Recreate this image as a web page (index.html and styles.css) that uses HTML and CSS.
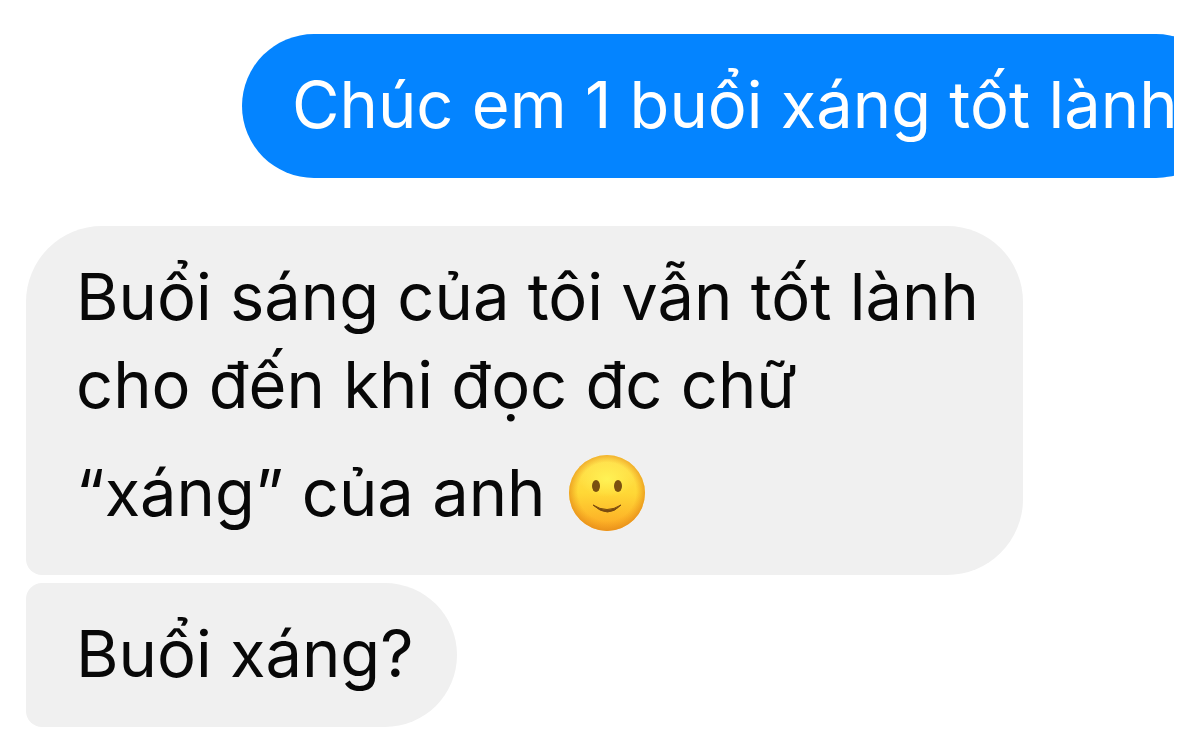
FILE: index.html
```html
<!DOCTYPE html>
<html lang="vi">
<head>
    <meta charset="UTF-8">
    <meta name="viewport" content="width=device-width, initial-scale=1.0">
    <title>Tin nhắn</title>
    <link rel="stylesheet" href="styles.css">
</head>
<body>
    <main class="chat">
        <div class="row sent">
            <p class="bubble">Chúc em 1 buổi xáng tốt lành</p>
        </div>
        <div class="row received">
            <p class="bubble first">Buổi sáng của tôi vẫn tốt lành<br>cho đến khi đọc đc chữ
                <span class="last-line">“xáng” của anh
                    <svg class="emoji" viewBox="0 0 76 76" role="img" aria-label="mặt cười">
                        <defs>
                            <linearGradient id="face" x1="0" y1="0" x2="0" y2="1">
                                <stop offset="0" stop-color="#ffe352"/>
                                <stop offset="0.5" stop-color="#ffd836"/>
                                <stop offset="1" stop-color="#fca522"/>
                            </linearGradient>
                            <radialGradient id="edge" cx="50%" cy="48%" r="51%">
                                <stop offset="0.75" stop-color="#ee9a1c" stop-opacity="0"/>
                                <stop offset="1" stop-color="#e68f1a" stop-opacity="0.8"/>
                            </radialGradient>
                            <radialGradient id="shine">
                                <stop offset="0" stop-color="#fff85a" stop-opacity="0.8"/>
                                <stop offset="1" stop-color="#fff85a" stop-opacity="0"/>
                            </radialGradient>
                        </defs>
                        <circle cx="38" cy="38" r="38" fill="url(#face)"/>
                        <circle cx="38" cy="38" r="38" fill="url(#edge)"/>
                        <ellipse cx="38" cy="24" rx="28" ry="18" fill="url(#shine)"/>
                        <ellipse cx="27" cy="31" rx="4" ry="6" fill="#7a5010"/>
                        <ellipse cx="49" cy="31" rx="4" ry="6" fill="#7a5010"/>
                        <path d="M24 50 Q38 59 52 50 Q39 64 24 50Z" fill="#7a4b10" stroke="#7a4b10" stroke-width="1" stroke-linejoin="round"/>
                    </svg>
                </span>
            </p>
            <p class="bubble last">Buổi xáng?</p>
        </div>
    </main>
</body>
</html>
```

FILE: styles.css
```css
* {
    box-sizing: border-box;
}
body {
    margin: 0;
    background-color: #ffffff;
    font-family: Inter, "Noto Sans", sans-serif;
    font-size: 65px;
    line-height: 88px;
    color: #080808;
}
.chat {
    display: flex;
    flex-direction: column;
    gap: 48px;
    padding: 34px 26px 24px;
}
.row {
    display: flex;
    flex-direction: column;
}
.bubble {
    margin: 0;
    padding: 27px 50px 29px;
    white-space: nowrap;
}
/* long message runs past the right edge and is cut there */
.sent {
    overflow: hidden;
    padding-left: 216px;
}
.sent .bubble {
    align-self: flex-start;
    background-color: #0484ff;
    color: #ffffff;
    border-radius: 72px;
}
.received {
    align-items: flex-start;
    gap: 8px;
}
.received .bubble {
    padding-right: 44px;
    background-color: #f0f0f0;
}
.received .first {
    padding-bottom: 38px;
    border-radius: 76px 76px 76px 16px;
}
.received .last {
    border-radius: 16px 72px 72px 16px;
}
.last-line {
    display: flex;
    align-items: center;
    gap: 24px;
    padding-top: 20px;
}
.emoji {
    width: 76px;
    height: 76px;
}
```
